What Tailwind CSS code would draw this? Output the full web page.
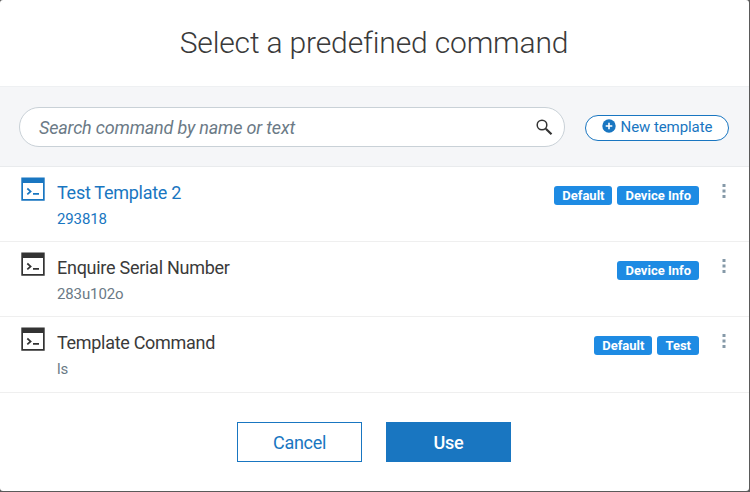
<!DOCTYPE html>
<html lang="en">
<head>
<meta charset="utf-8">
<title>Select a predefined command</title>
<script src="https://cdn.jsdelivr.net/npm/@tailwindcss/browser@4"></script>
</head>
<body class="h-[492px] w-[750px] overflow-hidden bg-[#5a5a5a] font-['Roboto',sans-serif] text-[#3a3a3a]">
<svg class="hidden">
  <symbol id="terminal" viewBox="0 0 24 24"><path fill="currentColor" fill-rule="evenodd" d="M.3.4h23.4v23.3H.3zM2 6v15.9h20V6z"/><path fill="none" stroke="currentColor" stroke-width="1.7" d="M6.3 11.5l3.3 2.9-3.3 2.9M12 16.8h6"/></symbol>
  <symbol id="dots" viewBox="0 0 4 14"><path fill="currentColor" d="M.5 0h3v3h-3zM.5 5.5h3v3h-3zM.5 11h3v3h-3z"/></symbol>
</svg>
<main class="flex h-[491px] w-[749px] flex-col rounded-[3px] bg-white">
  <header class="flex h-[86px] items-center justify-center pr-px">
    <h1 class="text-[30px] font-light leading-[36px] tracking-[-0.16px]">Select a predefined command</h1>
  </header>
  <section class="flex h-[81px] items-center border-y border-t-[#eef0f2] border-b-[#e9ebed] bg-[#f5f6f8] pl-[19px] pr-5">
    <div class="flex h-10 w-[546px] items-center justify-between rounded-full border border-[#c9d1d7] bg-white pl-[19px] pr-[11px] pt-0.5">
      <span class="text-[18px] italic leading-6 tracking-[-0.18px] text-[#6b7a86]">Search command by name or text</span>
      <svg class="size-[17px]" viewBox="0 0 17 17" fill="none" stroke="#333"><circle cx="6" cy="6" r="4.8" stroke-width="1.5"/><path stroke-width="2.2" d="M9.8 9.8l5.7 5.5"/></svg>
    </div>
    <button class="ml-5 mt-0.5 flex h-[26px] w-36 items-center justify-center gap-[5px] rounded-full border border-[#1976c1] bg-white pb-px text-[15px] leading-5 tracking-[-0.08px] text-[#1976c1]">
      <svg class="mb-0.5 size-[14px]" viewBox="0 0 14 14"><circle cx="7" cy="7" r="6.7" fill="#1976c1"/><path d="M7 3.7v6.6M3.7 7h6.6" stroke="#fff" stroke-width="1.6"/></svg>
      <span>New template</span>
    </button>
  </section>
  <ul>
    <li class="flex h-[75px] border-b border-[#efefef] pl-[21px] pr-[23px] text-[#1976c1]">
      <svg class="mt-[10px] size-6"><use href="#terminal"/></svg>
      <div class="ml-3 mt-[14px] flex-1"><p class="text-[18px] leading-6 tracking-[-0.27px]">Test Template 2</p><p class="mt-1 text-[15px] leading-5 tracking-[-0.12px]">293818</p></div>
      <div class="mt-[19px] flex h-[19px] gap-[5px] text-[13px] font-bold leading-[19px] text-white"><span class="rounded-[3px] bg-[#1e8be3] px-2">Default</span><span class="rounded-[3px] bg-[#1e8be3] px-2">Device Info</span></div>
      <svg class="ml-[23px] mt-[17px] h-[14px] w-1 text-[#8599a8]"><use href="#dots"/></svg>
    </li>
    <li class="flex h-[75px] border-b border-[#efefef] pl-[21px] pr-[23px]">
      <svg class="mt-[10px] size-6 text-[#333]"><use href="#terminal"/></svg>
      <div class="ml-3 mt-[14px] flex-1"><p class="text-[18px] leading-6 tracking-[-0.27px]">Enquire Serial Number</p><p class="mt-1 text-[15px] leading-5 tracking-[-0.12px] text-[#6b7a86]">283u102o</p></div>
      <div class="mt-[19px] flex h-[19px] gap-[5px] text-[13px] font-bold leading-[19px] text-white"><span class="rounded-[3px] bg-[#1e8be3] px-2">Device Info</span></div>
      <svg class="ml-[23px] mt-[17px] h-[14px] w-1 text-[#8599a8]"><use href="#dots"/></svg>
    </li>
    <li class="flex h-[76px] border-b border-[#efefef] pl-[21px] pr-[23px]">
      <svg class="mt-[10px] size-6 text-[#333]"><use href="#terminal"/></svg>
      <div class="ml-3 mt-[14px] flex-1"><p class="text-[18px] leading-6 tracking-[-0.3px]">Template Command</p><p class="mt-1 text-[15px] leading-5 tracking-[-0.12px] text-[#6b7a86]">ls</p></div>
      <div class="mt-[19px] flex h-[19px] gap-[5px] text-[13px] font-bold leading-[19px] text-white"><span class="rounded-[3px] bg-[#1e8be3] px-2">Default</span><span class="rounded-[3px] bg-[#1e8be3] px-2">Test</span></div>
      <svg class="ml-[23px] mt-[17px] h-[14px] w-1 text-[#8599a8]"><use href="#dots"/></svg>
    </li>
  </ul>
  <footer class="flex justify-center gap-6 pr-px pt-[29px] text-[18px] tracking-[-0.3px]">
    <button class="h-10 w-[125px] border border-[#1976c1] bg-white text-[#1976c1]">Cancel</button>
    <button class="h-10 w-[125px] bg-[#1976c1] font-medium text-white">Use</button>
  </footer>
</main>
</body>
</html>
